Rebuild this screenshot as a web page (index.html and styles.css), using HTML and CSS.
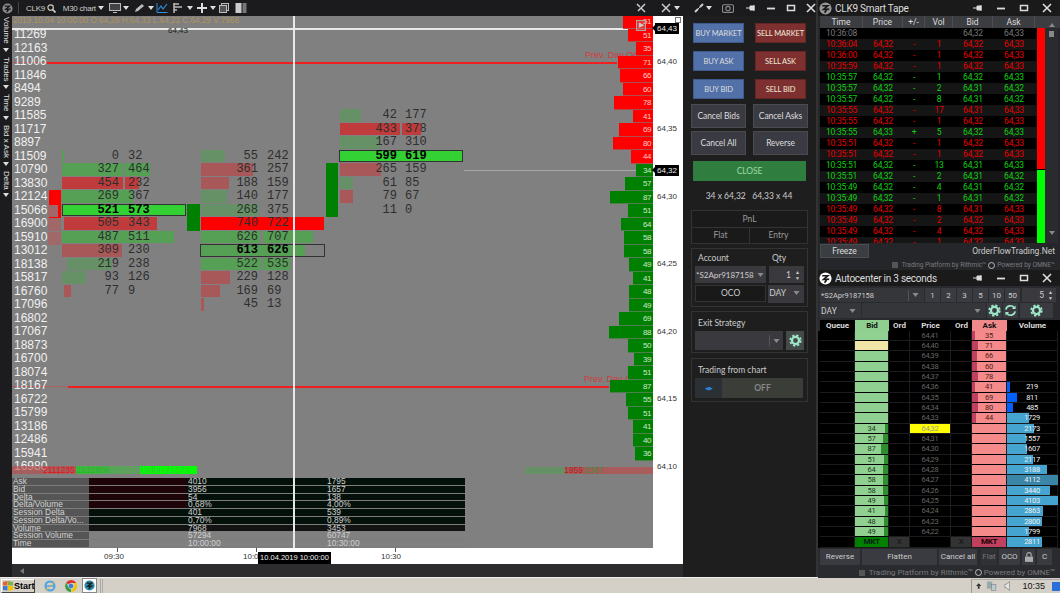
FILE: index.html
```html
<!DOCTYPE html>
<html lang="en">
<head>
<meta charset="utf-8">
<title>CLK9 chart</title>
<link rel="stylesheet" href="styles.css">
</head>
<body>
<svg class="defs" width="0" height="0">
  <symbol id="logo" viewBox="0 0 14 14"><circle cx="7" cy="7" r="6.5" fill="currentColor"/><path d="M3.5 4h6L5 8h3.5L6 11.5M9 7.5l2 .5" fill="none" stroke="#1a1a1a" stroke-width="1.8"/></symbol>
  <symbol id="pin" viewBox="0 0 10 8"><path d="M0 4h4M4 2h4v4H4zM8 1v6" stroke="currentColor" fill="currentColor" stroke-width="1"/></symbol>
  <symbol id="min" viewBox="0 0 10 8"><path d="M1 4.500h8" stroke="currentColor" stroke-width="1.800"/></symbol>
  <symbol id="max" viewBox="0 0 10 8"><rect x="1.500" y="1.500" width="7" height="5" fill="none" stroke="currentColor" stroke-width="1.500"/></symbol>
  <symbol id="close" viewBox="0 0 10 10"><path d="M1 1l8 8M9 1l-8 8" stroke="currentColor" stroke-width="1.600"/></symbol>
  <symbol id="gear" viewBox="0 0 14 14"><circle cx="7" cy="7" r="3.800" fill="none" stroke="currentColor" stroke-width="2.400"/><circle cx="7" cy="7" r="5.700" fill="none" stroke="currentColor" stroke-width="1.800" stroke-dasharray="2.500 2"/></symbol>
  <symbol id="refresh" viewBox="0 0 14 14"><path d="M2 6a5 5 0 0 1 9-2M12 8a5 5 0 0 1-9 2" fill="none" stroke="currentColor" stroke-width="1.800"/><path d="M12.500 1.500v4h-4zM1.500 12.500v-4h4z" fill="currentColor"/></symbol>
  <symbol id="caret" viewBox="0 0 6 4"><path d="M0 0h6L3 4z" fill="currentColor"/></symbol>
</svg>

<div class="desktop">
  <section class="chart-win">
    <header class="toolbar">
      <svg class="ico logo-gray"><use href="#logo"/></svg>
      <span class="tool-sep"></span>
      <span class="tool-label">CLK9</span>
      <svg class="ico-s ico-search" viewBox="0 0 10 10"><circle cx="4" cy="4" r="3" fill="none" stroke="#ccc" stroke-width="1.300"/><path d="M6 6l3.500 3.500" stroke="#ccc" stroke-width="1.800"/></svg>
      <span class="tool-label tool-wide">M30 chart<svg class="caret"><use href="#caret"/></svg></span>
      <span class="tool-group"><svg class="ico-m" viewBox="0 0 12 10"><rect x=".5" y=".5" width="11" height="7" fill="#444" stroke="#bbb"/><path d="M4 9.500h4" stroke="#bbb"/></svg><svg class="caret"><use href="#caret"/></svg></span>
      <span class="tool-group tg-0"><svg class="ico-m" viewBox="0 0 12 10"><path d="M1 9l1-3 6-5 2 2-6 5z" fill="#bbb"/></svg><svg class="caret"><use href="#caret"/></svg></span>
      <svg class="ico-m ico-line" viewBox="0 0 11 10"><path d="M.5 0v9.500H11" fill="none" stroke="#2f8fe0"/><path d="M1.500 7l3-4 2 3 4-5" fill="none" stroke="#2f8fe0" stroke-width="1.100"/></svg>
      <span class="tool-group tg-1"><svg class="ico-m" viewBox="0 0 12 10"><path d="M1 0v10M1 1h5M1 4h8M1 7h3" fill="none" stroke="#bbb" stroke-width="1.500"/></svg><svg class="caret"><use href="#caret"/></svg></span>
      <span class="tool-group tg-0"><svg class="ico-m" viewBox="0 0 10 10"><path d="M5 0v10M0 5h10" stroke="#ddd" stroke-width="2"/></svg><svg class="caret"><use href="#caret"/></svg></span>
      <svg class="ico-m" viewBox="0 0 10 10"><rect x="2.500" y=".5" width="7" height="7" fill="#333" stroke="#bbb"/><rect x=".5" y="2.500" width="7" height="7" fill="#555" stroke="#bbb"/></svg>
      <svg class="ico-m ico-cols" viewBox="0 0 11 10"><rect width="6" height="10" fill="#ccc"/><rect x="7" width="4" height="10" fill="#777"/></svg>
      <span class="tool-fill"></span>
      <svg class="ico-s" viewBox="0 0 10 10"><path d="M1 1l3 3M9 1L2 8M5 5l4 4" stroke="#ccc" stroke-width="1.500"/></svg>
      <svg class="ico-s ico-tools" viewBox="0 0 10 10"><path d="M1 1l8 8M9 1L1 9" stroke="#ccc" stroke-width="1.500"/></svg>
      <svg class="caret caret-end"><use href="#caret"/></svg>
    </header>
    <div class="chart-body">
      <aside class="side">
        <span class="side-item">Volume</span><svg class="caret"><use href="#caret"/></svg>
        <span class="side-item">Trades</span><svg class="caret"><use href="#caret"/></svg>
        <span class="side-item">Time</span><svg class="caret"><use href="#caret"/></svg>
        <span class="side-item">Bid x Ask</span><svg class="caret"><use href="#caret"/></svg>
        <span class="side-item">Delta</span><svg class="caret"><use href="#caret"/></svg>
      </aside>
      <div class="chart-main">
        <div class="chart-top">
          <div class="plot">
            <div class="canvas" id="canvas"></div>
            <div class="stats" id="stats"></div>
            <div class="cross-v"></div>
          </div>
          <div class="axis" id="axis"></div>
        </div>
        <div class="timeaxis">
          <span class="tick tick-a"></span><span class="tlabel tl-a">09:30</span>
          <span class="tick tick-b"></span><span class="tlabel tl-b">10:00</span>
          <span class="tick tick-c"></span><span class="tlabel tl-c">10:30</span>
          <span class="ttip">10.04.2019 10:00:00</span>
        </div>
        <div class="hscroll"><svg class="hs-arrow" viewBox="0 0 4 6"><path d="M4 0v6L0 3z" fill="#777"/></svg></div>
      </div>
    </div>
  </section>

  <section class="order">
    <header class="order-bar">
      <svg class="ico-s" viewBox="0 0 10 10"><path d="M1 9l3-3M6 4l3-3" stroke="#ccc" stroke-width="2"/><path d="M3 7l4-4" stroke="#ccc"/></svg>
      <svg class="caret"><use href="#caret"/></svg>
      <svg class="ico-m cam" viewBox="0 0 11 9"><rect x=".5" y="1.500" width="10" height="7" rx="1" fill="none" stroke="#888"/><circle cx="5.500" cy="5" r="2" fill="none" stroke="#888"/></svg>
      <svg class="winb"><use href="#pin"/></svg>
      <svg class="winb"><use href="#min"/></svg>
      <svg class="winb"><use href="#max"/></svg>
      <svg class="winb winx"><use href="#close"/></svg>
    </header>
    <div class="trade-grid">
      <button class="btn buy">BUY MARKET</button><button class="btn sell">SELL MARKET</button>
      <button class="btn buy">BUY ASK</button><button class="btn sell">SELL ASK</button>
      <button class="btn buy">BUY BID</button><button class="btn sell">SELL BID</button>
    </div>
    <div class="cancel-grid">
      <button class="btn cancel">Cancel Bids</button><button class="btn cancel">Cancel Asks</button>
      <button class="btn cancel">Cancel All</button><button class="btn cancel">Reverse</button>
    </div>
    <button class="btn close-btn">CLOSE</button>
    <div class="quote">34 x 64,32 &nbsp; 64,33 x 44</div>
    <div class="pnl">
      <div class="pnl-head">PnL</div>
      <div class="pnl-row"><span>Flat</span><span>Entry</span></div>
    </div>
    <div class="box box-account">
      <div class="acc-labels"><span>Account</span><span>Qty</span></div>
      <div class="acc-row">
        <div class="select sel-acc"><span>*S2Apr9187158</span><i class="sdiv"></i><svg class="caret"><use href="#caret"/></svg></div>
        <div class="select sel-qty"><span>1</span><span class="spin">&#9650;<br>&#9660;</span></div>
      </div>
      <div class="acc-row">
        <div class="oco">OCO</div>
        <div class="select sel-day"><span>DAY</span><svg class="caret"><use href="#caret"/></svg></div>
      </div>
    </div>
    <div class="box box-exit">
      <div class="box-title">Exit Strategy</div>
      <div class="acc-row">
        <div class="select sel-exit"><i class="sdiv"></i><svg class="caret"><use href="#caret"/></svg></div>
        <div class="gear-btn"><svg class="gear"><use href="#gear"/></svg></div>
      </div>
    </div>
    <div class="box box-trade">
      <div class="box-title">Trading from chart</div>
      <div class="toggle"><span class="tog-arrows">&#9664;&#9654;</span><span class="tog-off">OFF</span></div>
    </div>
  </section>

  <div class="right-col">
    <section class="tape">
      <header class="titlebar">
        <svg class="tlogo"><use href="#logo"/></svg>
        <span class="ttl">CLK9 Smart Tape</span>
        <svg class="winb"><use href="#pin"/></svg><svg class="winb"><use href="#min"/></svg><svg class="winb"><use href="#max"/></svg><svg class="winb winx"><use href="#close"/></svg>
      </header>
      <div class="tape-head"><span>Time</span><span>Price</span><span>+/-</span><span>Vol</span><span>Bid</span><span>Ask</span></div>
      <div class="tape-body">
        <div class="tape-rows" id="tape"></div>
        <div class="imbalance"><i class="im-red"></i><i class="im-green"></i></div>
        <div class="vscroll"><span class="vs-up"></span><span class="vs-thumb"></span><span class="vs-down"></span></div>
      </div>
      <div class="tape-foot"><button class="btn freeze">Freeze</button><span class="brand">OrderFlowTrading.Net</span></div>
      <div class="powered"><span class="pw-box"></span>Trading Platform by Rithmic&trade; <i class="pw-ring"></i> Powered by OMNE&trade;</div>
    </section>

    <section class="dom">
      <header class="titlebar">
        <svg class="tlogo white"><use href="#logo"/></svg>
        <span class="ttl">Autocenter in 3 seconds</span>
        <svg class="winb"><use href="#pin"/></svg><svg class="winb"><use href="#min"/></svg><svg class="winb"><use href="#max"/></svg><svg class="winb winx"><use href="#close"/></svg>
      </header>
      <div class="ctl-row ctl-1">
        <div class="select dsel"><span>*S2Apr9187158</span><i class="sdiv"></i><svg class="caret"><use href="#caret"/></svg></div>
        <span class="qbtn">1</span><span class="qbtn">2</span><span class="qbtn">3</span><span class="qbtn">5</span><span class="qbtn">10</span><span class="qbtn">50</span>
        <div class="select dqty"><span>5</span><span class="spin">&#9650;<br>&#9660;</span></div>
      </div>
      <div class="ctl-row ctl-2">
        <div class="select dday"><span>DAY</span><svg class="caret"><use href="#caret"/></svg></div>
        <div class="select dstr"><svg class="caret"><use href="#caret"/></svg></div>
        <span class="gbtn"><svg class="gear"><use href="#gear"/></svg></span>
        <span class="gbtn"><svg class="gear"><use href="#refresh"/></svg></span>
        <span class="gbtn gwide"><svg class="gear"><use href="#gear"/></svg></span>
      </div>
      <div class="dom-head"><span>Queue</span><span class="h-bid">Bid</span><span>Ord</span><span>Price</span><span>Ord</span><span class="h-ask">Ask</span><span>Volume</span></div>
      <div class="dom-rows" id="dom"></div>
      <div class="dom-btns">
        <span class="dbtn b-rev">Reverse</span><span class="dbtn b-fl">Flatten</span><span class="dbtn b-can">Cancel all</span><span class="dbtn b-flat">Flat</span><span class="dbtn b-oco">OCO</span>
        <span class="dbtn b-lock"><svg class="lock" viewBox="0 0 9 11"><rect y="5" width="9" height="6" fill="#aaa"/><path d="M2 5V3a2.500 2.500 0 0 1 5 0v2" fill="none" stroke="#aaa" stroke-width="1.300"/></svg></span>
        <span class="dbtn b-c">C</span>
      </div>
      <div class="powered dom-pw"><span class="pw-box"></span>Trading Platform by Rithmic&trade; <i class="pw-ring"></i> Powered by OMNE&trade;</div>
    </section>
  </div>
</div>

<footer class="taskbar">
  <button class="start"><svg class="flag" viewBox="0 0 10 10"><path d="M0 1l4.500-1v4.500H0z" fill="#e8622a"/><path d="M5 0l5 1v3.500H5z" fill="#7cb342"/><path d="M0 5h4.500v4.500L0 9z" fill="#3a7bd5"/><path d="M5 5h5v4l-5 1z" fill="#f5c400"/></svg>Start</button>
  <svg class="tb-ico ie" viewBox="0 0 12 12"><circle cx="6" cy="6" r="4.500" fill="none" stroke="#4aa3e0" stroke-width="2"/><path d="M1 6h10" stroke="#4aa3e0" stroke-width="1.500"/><path d="M1 10C3 11 9 4 11 1" fill="none" stroke="#e8b84a"/></svg>
  <svg class="tb-ico ch" viewBox="0 0 12 12"><path d="M6 0a6 6 0 0 1 5.200 3H6a3 3 0 0 0-2.600 1.500L1.200 2.600A6 6 0 0 1 6 0z" fill="#d33"/><path d="M11.200 3A6 6 0 0 1 6 12l2.600-4.500A3 3 0 0 0 8.500 3z" fill="#f5c400"/><path d="M6 12A6 6 0 0 1 1.200 2.600L3.500 7.500A3 3 0 0 0 6 9z" fill="#3a9b45"/><circle cx="6" cy="6" r="2.300" fill="#3a7bd5"/></svg>
  <span class="tb-app"><svg class="tb-logo"><use href="#logo"/></svg></span>
  <span class="tb-grip"></span>
  <span class="tb-fill"></span>
  <div class="tray">
    <svg class="tray-a" viewBox="0 0 6 6"><path d="M3 0l3 3H4v3H2V3H0z" fill="#333"/></svg>
    <svg class="tray-n" viewBox="0 0 12 12"><rect x="1" y="1" width="6" height="8" fill="#9aa"/><rect x="6" y="4" width="5" height="7" fill="#bcc" stroke="#667" stroke-width=".5"/></svg>
    <svg class="tray-s" viewBox="0 0 8 12"><path d="M1 4h2l3-3v10L3 8H1z" fill="#e8e8e8" stroke="#666" stroke-width=".6"/></svg>
    <span class="clock">10:35</span>
    <span class="showdesk"></span>
  </div>
</footer>
<script src="script.js"></script>
</body>
</html>
```
FILE: styles.css
```css
* { box-sizing: border-box; }
html, body { margin: 0; padding: 0; }
body { width: 1060px; height: 593px; overflow: hidden; background: #1c1c1c; font-family: Roboto, "Liberation Sans", sans-serif; color: #ccc; }
.defs { position: absolute; }
button { font-family: inherit; padding: 0; }
.desktop { display: flex; height: 577px; }
.caret { width: 6px; height: 4px; color: #ddd; flex: none; display: inline-block; }

/* chart window */
.chart-win { width: 684px; display: flex; flex-direction: column; background: #1c1c1f; }
.toolbar { height: 16px; flex: none; display: flex; align-items: center; padding-left: 2px; background: #1b1b1d; font-size: 8px; color: #ccc; white-space: nowrap; }
.ico { width: 11px; height: 11px; }
.logo-gray { color: #888; }
.tool-sep { width: 1px; height: 12px; background: #444; margin: 0 7px 0 5px; }
.tool-label { display: inline-flex; align-items: center; gap: 2px; font-family: "Liberation Sans", sans-serif; letter-spacing: -.3px; }
.ico-s { width: 10px; height: 10px; margin-left: 4px; flex: none; }
.ico-search { margin-left: 2px; width: 9px; height: 9px; }
.tool-wide { width: 46px; margin-left: 7px; }
.tool-group { display: inline-flex; align-items: center; gap: 2px; width: 22px; margin-right: 3px; }
.tg-0 { margin-right: 0; }
.tg-1 { margin-right: 1px; }
.ico-m { width: 12px; height: 10px; flex: none; }
.ico-line { margin: 0 5px 0 0; }
.ico-cols { margin-left: 5px; }
.tool-fill { flex: 1; }
.ico-tools { margin-left: 15px; }
.caret-end { margin: 0 4px 0 3px; }

.chart-body { flex: 1; display: flex; min-height: 0; }
.side { width: 12px; flex: none; display: flex; flex-direction: column; align-items: center; gap: 4px; background: #1c1c1f; }
.side-item { writing-mode: vertical-rl; font: 8px/11px "Liberation Sans", sans-serif; color: #e0e0e0; margin-top: 1px; }
.chart-main { flex: 1; display: flex; flex-direction: column; padding-right: 1px; min-width: 0; }
.chart-top { height: 532px; display: flex; }
.plot { width: 641px; position: relative; display: flex; flex-direction: column; background: #808080; }
.canvas { position: relative; height: 462px; overflow: hidden; }
.axis { width: 30px; background: #fff; position: relative; }
.cross-v { position: absolute; left: 281px; top: 0; bottom: 0; width: 1.500px; background: #e8e8e8; }
.mark { position: absolute; white-space: nowrap; }

.num { font: 12px/14px "Liberation Sans", sans-serif; color: #f0f0f0; }
.fp { font: 12px/14px "Liberation Mono", monospace; color: #2e2e2e; }
.fp-b { font-weight: 700; color: #000; }
.bar-g { background: #55a055; }
.bar-gd { background: #669166; }
.bar-r { background: #c03c3c; }
.bar-rd { background: #a85858; }
.bar-R { background: #f00; }
.bar-G { background: #33d133; }
.poc { border: 1px solid #333; }
.poc-empty { border: 1px solid #333; background: transparent; }
.candle-r { background: #f00; }
.candle-g { background: #008000; }
.candle-dim { background: #a06868; }
.line-red { background: #f02020; }
.line-faint { background: #b06060; }
.line-w { background: #e8e8e8; }
.line-g { background: #a8a8a8; }
.ohlc { font: 8.200px/10px "Liberation Sans", sans-serif; color: #b0935c; }
.px { font: 8px/12px "Liberation Sans", sans-serif; color: #222; }
.prev { font: 9px/12px "Liberation Sans", sans-serif; color: #d23c3c; }
.pf { font: 8px/13px "Liberation Sans", sans-serif; letter-spacing: -.5px; text-align: right; padding-right: 2px; color: #e4e4e4; border-bottom: 1px solid rgba(128,128,128,.6); }
.pf-r { background: #f00; color: #ffc8c8; }
.pf-g { background: #008000; color: #cfe8cf; }
.nav-box { border: 1px solid #aaa; color: #ccc; font-size: 7px; line-height: 8px; text-align: center; background: rgba(200,200,200,.25); }
.strip-r { background: rgba(190,70,70,.6); }
.strip-g { background: linear-gradient(90deg, #3fb83f, #669a66); }
.strip-l { background: #0f0; }
.strip-dg { background: #669166; }
.strip-dr { background: #a85c5c; }
.stx { font: 8.500px/10px "Liberation Sans", sans-serif; }
.tx-r { color: #e81010; }
.tx-g { color: #16c016; }
.tx-l { color: #3cc83c; }
.tx-dr { color: #b02020; }
.tx-dg { color: #3f8f3f; }

.ax { font: 8px/12px "Liberation Sans", sans-serif; color: #333; }
.tag { width: 24px; height: 11px; background: #000; color: #eee; font: 8px/11px "Liberation Sans", sans-serif; text-align: center; }
.tag::before { content: ""; position: absolute; left: -3px; top: 2px; border: 3.500px solid transparent; border-left-width: 0; border-right: 3px solid #000; }
.ax-ico { border: 1px solid #777; background: #fff; }

.stats { height: 70px; display: grid; grid-template-columns: 77px 98px 139px 139px; grid-auto-rows: 7.750px; font: 9px/7.750px "Liberation Sans", sans-serif; color: #d0d0d0; overflow: hidden; }
.st { border-bottom: 1px solid #7c7c7c; padding-left: 1px; white-space: nowrap; overflow: visible; }
.st span { display: inline-block; transform: scaleX(.93); transform-origin: left center; }
.st-l { background: #555; color: #d4d4d4; }
.st-dr { background: #1e0308; }
.st-dg { background: #04100a; }
.st-k { background: #131313; }
.st-gr { background: #808080; }

.timeaxis { height: 16px; background: #fff; position: relative; font: 8px/12px "Liberation Sans", sans-serif; color: #333; flex: none; }
.tick { position: absolute; top: 0; width: 1px; height: 4px; background: #555; }
.tick-a { left: 105px; }
.tick-b { left: 244px; }
.tick-c { left: 383px; }
.tlabel { position: absolute; top: 3px; }
.tl-a { left: 92px; }
.tl-b { left: 231px; }
.tl-c { left: 369px; }
.ttip { position: absolute; left: 246px; top: 4px; width: 73px; height: 12px; background: #000; color: #eee; font-size: 7.500px; text-align: center; white-space: nowrap; }
.hscroll { height: 13px; background: #2c2c2e; display: flex; align-items: center; padding-left: 8px; }
.hs-arrow { width: 4px; height: 6px; }

/* order panel */
.order { width: 134px; flex: none; background: #1e1e1e; border-right: 2px solid #333; font-family: Lato, Roboto, sans-serif; }
.order-bar { height: 16px; display: flex; align-items: center; padding-left: 6px; background: #1b1b1d; color: #ccc; }
.order-bar .caret { margin: 0 0 0 2px; }
.cam { margin: 0 12px 0 10px; }
.winb { width: 10px; height: 8px; color: #ddd; flex: none; margin-right: 10px; }
.winx { height: 10px; margin-right: 0; }
.btn { border: 1px solid #444; color: #ddd; font-size: 8.500px; letter-spacing: -.1px; white-space: nowrap; cursor: default; display: block; text-align: center; }
.trade-grid { display: grid; grid-template-columns: 51px 51px; grid-auto-rows: 20px; column-gap: 11px; row-gap: 8px; margin: 7px 0 0 9px; }
.buy { background: #5271a8; border-color: #3c5a90; font-size: 7.500px; }
.sell { background: #7e2f2f; border-color: #652424; color: #eed; font-size: 7.500px; }
.cancel-grid { display: grid; grid-template-columns: 55px 55px; grid-auto-rows: 24px; column-gap: 7px; row-gap: 3px; margin: 5px 0 0 7px; }
.cancel { background: #3a3a42; border-color: #4b4b4f; }
.close-btn { width: 113px; height: 20px; margin: 6px 0 0 9px; background: #2f7d3f; border-color: #2f7d3f; color: #a0d8a8; }
.quote { margin-top: 8px; height: 14px; font-size: 8.500px; line-height: 14px; text-align: center; color: #ccc; padding-right: 2px; }
.pnl { margin: 7px 0 0 7px; width: 117px; border: 1px solid #333; font-size: 8.500px; color: #999; background: #1a1a1a; height: 34px; }
.pnl-head { height: 17px; line-height: 16px; text-align: center; border-bottom: 1px solid #333; }
.pnl-row { display: flex; line-height: 15px; }
.pnl-row span { flex: 1; text-align: center; }
.pnl-row span + span { border-left: 1px solid #333; }
.box { margin: 4px 0 0 7px; width: 117px; border: 1px solid #333; padding: 0 3px; font-size: 8.500px; }
.box-account { height: 59px; }
.box-exit { height: 42px; }
.box-trade { height: 44px; margin-top: 5px; }
.acc-labels { display: flex; height: 17px; line-height: 18px; padding: 0 0 0 3px; color: #ccc; }
.acc-labels span:first-child { width: 74px; }
.acc-row { display: flex; gap: 3px; margin-bottom: 2px; }
.select { background: #3a3a3e; color: #ccc; display: flex; align-items: center; font-size: 8.500px; height: 17px; }
.select .caret { color: #8a8a8a; width: 7px; }
.sdiv { width: 1px; height: 11px; background: #555; margin: 0 3px 0 auto; }
.sel-acc { width: 71px; padding-left: 1px; }
.sel-acc .caret { margin-right: 3px; }
.sel-acc span { white-space: nowrap; font-size: 8px; }
.sel-qty { width: 36px; justify-content: flex-end; padding-right: 4px; gap: 4px; }
.spin { font-size: 5px; line-height: 6px; color: #ccc; }
.oco { width: 72px; height: 17px; border: 1px solid #333; text-align: center; line-height: 15px; background: #191919; color: #ccc; }
.sel-day { width: 36px; height: 18px; justify-content: space-between; padding: 0 4px 3px 1px; margin-left: -1px; }
.box-title { height: 19px; line-height: 22px; padding-left: 3px; color: #ccc; }
.sel-exit { width: 88px; height: 19px; padding-right: 3px; }
.sel-exit .sdiv { margin-right: 3px; }
.gear-btn { width: 18px; height: 19px; background: #444a4a; display: flex; align-items: center; justify-content: center; }
.gear { width: 13px; height: 13px; color: #9fe8c8; }
.toggle { display: flex; height: 20px; width: 108px; background: #3a3d38; }
.tog-arrows { width: 27px; background: #2b3035; color: #2a86e0; font-size: 5px; line-height: 20px; text-align: center; }
.tog-off { flex: 1; text-align: center; line-height: 20px; color: #888; font-weight: 700; }

/* right column */
.right-col { width: 242px; flex: none; display: flex; flex-direction: column; }
.tape { height: 270px; display: flex; flex-direction: column; background: #25262a; }
.titlebar { height: 16px; flex: none; display: flex; align-items: center; background: #1a1a1a; padding-right: 8px; color: #ddd; }
.tlogo { width: 13px; height: 13px; margin-left: 1px; color: #999; flex: none; }
.tlogo.white { color: #fff; }
.ttl { flex: 1; font-size: 10px; letter-spacing: -.25px; margin-left: 3px; color: #ddd; white-space: nowrap; }
.titlebar .winb { margin-right: 13px; }
.titlebar .winx { margin-right: 0; }
.tape-head { height: 12px; flex: none; margin-left: 2px; display: grid; grid-template-columns: 43px 40px 22px 28px 40px 42px 25px; background: #3b3d41; font-size: 8.500px; line-height: 12px; text-align: center; color: #ddd; }
.tape-head span { border-right: 1px solid #4c4e52; }
.tape-body { height: 215px; flex: none; display: flex; margin-left: 2px; }
.tape-rows { width: 217px; overflow: hidden; background: #000; }
.tr { height: 11px; display: grid; grid-template-columns: 43px 40px 22px 28px 40px 42px; font-size: 8.500px; letter-spacing: -.2px; line-height: 11px; text-align: center; }
.tr:nth-child(even) { background: #151515; }
.tr-r { color: #e60000; }
.tr-g { color: #10d010; }
.tr-x { color: #777; }
.imbalance { width: 8px; display: flex; flex-direction: column; background: #000; }
.im-red { height: 141px; background: #f00; }
.im-green { flex: 1; margin-top: 1px; background: #0f0; }
.vscroll { width: 13px; background: #2a2b2f; display: flex; flex-direction: column; align-items: center; }
.vs-up { border: 3.500px solid transparent; border-top: 0; border-bottom: 4px solid #888; margin-top: -5px; }
.vs-thumb { width: 5px; height: 6px; background: #888; margin-top: 4px; }
.vs-down { border: 3.500px solid transparent; border-bottom: 0; border-top: 4px solid #888; margin-top: auto; margin-bottom: 8px; }
.tape-foot { height: 17px; flex: none; display: flex; align-items: center; justify-content: space-between; padding: 0 5px 1px 2px; }
.freeze { width: 49px; height: 14px; background: #3a3d42; border-color: #4a4c50; line-height: 12px; }
.brand { font-size: 8.500px; color: #ccc; }
.powered { height: 10px; flex: none; display: flex; align-items: center; justify-content: flex-end; font-size: 6.500px; color: #7a7a7a; padding-right: 5px; gap: 2px; white-space: nowrap; }
.pw-box { width: 6px; height: 6px; background: #555; margin-right: 2px; }
.pw-ring { width: 7px; height: 7px; border: 1px solid #bbb; border-radius: 50%; }

.dom { flex: 1; display: flex; flex-direction: column; background: #2a2b2f; }
.ctl-row { display: flex; align-items: stretch; margin-left: 2px; }
.ctl-1 { height: 14px; margin-top: 2px; gap: 1px; }
.ctl-2 { height: 15px; margin-top: 1px; gap: 1px; }
.dsel { width: 104px; height: 14px; padding-left: 1px; background: #35363a; font-size: 7.500px; }
.dsel .caret { margin-right: 5px; }
.qbtn { width: 15px; background: #3a3b40; font-size: 8px; line-height: 15px; text-align: center; color: #ccc; }
.dqty { width: 34px; height: 14px; margin-left: 1px; justify-content: flex-end; gap: 4px; padding-right: 3px; }
.dday { width: 41px; height: 15px; background: #35363a; justify-content: space-between; padding: 0 5px 0 1px; }
.dstr { width: 124px; height: 15px; background: #35363a; justify-content: flex-end; padding-right: 5px; }
.gbtn { width: 15px; background: #3a3b40; display: flex; align-items: center; justify-content: center; }
.gwide { width: 33px; margin-left: 1px; }
.dom-head, .dr { display: grid; grid-template-columns: 35px 34px 21px 41px 21px 35px 51px; margin-left: 2px; text-align: center; }
.dom-head { height: 11px; margin-top: 2px; background: #000; font-size: 8px; line-height: 11px; font-weight: 700; color: #ddd; }
.h-bid { background: #8fd08f; color: #111; }
.h-ask { background: #f08a8a; color: #111; }
.dom-rows { background: #000; }
.dr { height: 10px; font-size: 7.500px; letter-spacing: -.3px; line-height: 10px; background: #000; color: #555; }
.dr:nth-child(3n) { height: 11px; }
.dc { position: relative; border-bottom: 1px solid #1c1c1c; border-right: 1px solid #1c1c1c; min-height: 0; }
.dc-price { color: #666; }
.dc-last { background: #ff0; color: #999; }
.dc-bid { background: #90d090; color: #204020; border-bottom-color: #000; }
.dc-pale { background: #f0e6a8; }
.dc-ask { background: #f58a8a; color: #502020; border-bottom-color: #000; }
.dc-x { background: #333; color: #111; font-size: 8px; }
.dc-mktb { background: #008000; color: #021; font-weight: 700; font-size: 8px; }
.dc-mkta { background: #c04060; color: #200; font-weight: 700; font-size: 8px; }
.dc-vol { color: #eee; }
.cell-t { position: relative; }
.fill { position: absolute; top: 0; bottom: 0; }
.fill-bid { right: 0; background: #2f8f2f; }
.fill-ask { left: 0; background: #c04060; }
.fill-v { left: 0; background: #45a5d0; }
.fill-vb { left: 0; background: #0060ff; }
.fill-vd { left: 0; background: #3a86a8; }
.fill-s { left: 0; width: 3px; background: #008000; }
.dom-btns { display: flex; height: 16px; margin-top: 1px; margin-left: 2px; gap: 2px; }
.dbtn { background: #3a3b40; color: #ccc; font-size: 8px; line-height: 16px; text-align: center; white-space: nowrap; }
.b-rev { width: 40px; }
.b-fl { width: 75px; }
.b-can { width: 38px; }
.b-flat { width: 16px; margin-left: 2px; color: #777; background: #303135; }
.b-oco { width: 21px; }
.b-lock { width: 13px; }
.b-c { width: 15px; }
.lock { width: 8px; height: 10px; margin-top: 3px; }
.dom-pw { margin-top: 2px; height: 11px; font-size: 8px; }

/* taskbar */
.taskbar { height: 16px; background: #d4d0c8; display: flex; align-items: center; color: #000; border-top: 1px solid #eee; }
.start { width: 34px; height: 14px; margin-left: 1px; background: #d4d0c8; border: 1px solid; border-color: #fff #444 #444 #fff; font: 700 9px/12px "Liberation Sans", sans-serif; display: flex; align-items: center; gap: 1px; padding-left: 1px; }
.flag { width: 10px; height: 10px; flex: none; }
.tb-ico { width: 12px; height: 12px; flex: none; }
.ie { margin-left: 9px; }
.ch { margin-left: 9px; }
.tb-app { width: 15px; height: 15px; margin-left: 5px; background: #fff; border: 1px solid #888; display: flex; align-items: center; justify-content: center; }
.tb-logo { width: 11px; height: 11px; color: #2a8aa8; }
.tb-grip { width: 3px; height: 14px; margin-left: 3px; border-left: 1px solid #aaa; border-right: 1px solid #aaa; }
.tb-fill { flex: 1; }
.tray { width: 89px; height: 14px; display: flex; align-items: center; border-left: 1px solid #999; border-top: 1px solid #aaa; padding-left: 4px; }
.tray-a { width: 6px; height: 6px; }
.tray-n { width: 12px; height: 12px; margin-left: 5px; }
.tray-s { width: 8px; height: 12px; margin-left: 7px; }
.clock { font: 9px/14px "Liberation Sans", sans-serif; margin-left: 11px; color: #111; }
.showdesk { width: 9px; height: 9px; margin-left: 7px; background: #2a6fd8; }
```
FILE: script.js
```js
// page coordinates -> canvas coordinates (canvas origin is at 12,16)
var canvas = document.getElementById('canvas');
function add(parent, cls, x, y, w, h, text) {
  var el = document.createElement('div');
  el.className = 'mark ' + cls;
  el.style.left = x + 'px';
  el.style.top = y + 'px';
  if (w != null) el.style.width = w + 'px';
  if (h != null) el.style.height = h + 'px';
  if (text != null) el.textContent = text;
  parent.appendChild(el);
  return el;
}
function mark(cls, x, y, w, h, text) { return add(canvas, cls, x - 12, y - 16, w, h, text); }

// horizontal levels
mark('line-w', 12, 27.5, 641, 2);
mark('line-red', 47, 61.5, 570, 2);
mark('line-faint', 12, 62, 35, 1);
mark('line-faint', 12, 386, 56, 1);
mark('line-red', 68, 385.5, 541, 2);
mark('line-g', 464, 170, 176, 1);

// header texts
mark('ohlc', 13, 16, null, null, '2019.10.04 10:00:00 O:64,28 H:64,33 L:64,22 C:64,29 V:7968');
mark('px', 168, 25, null, null, '64,43');
mark('prev', 585, 49, null, null, 'Prev. Day Open');
mark('prev', 584, 373, null, null, 'Prev. Day Close');

// volume per row, left column
var vols = [11269,12163,11006,11846,8494,9289,11585,11717,8897,11509,10790,13830,12124,15066,16900,15910,13012,18138,15817,16760,17096,16802,17067,18873,16700,18074,18167,16722,15799,13186,12486,15941,16980];
vols.forEach(function (v, i) { mark('num', 14, 34 + 13.5 * i - 7, null, null, v); });

// candles
mark('candle-r', 49, 190, 12, 28);
mark('candle-dim', 48, 205, 10, 12);
mark('candle-dim', 48, 218, 13, 13);
mark('candle-dim', 48, 232, 13, 13);
mark('candle-g', 187, 204, 13, 27);
mark('candle-g', 326, 163, 12, 54);

// footprint cells: [row, bid, ask, [barClass, x0, x1]..., opts]
var cols = [
  { bidR: 119, askL: 128, rows: [
    [9, 0, 32, [['bar-g', 62, 64]]],
    [10, 327, 464, [['bar-g', 62, 123], ['bar-g', 125, 150]]],
    [11, 454, 232, [['bar-r', 62, 123], ['bar-r', 125, 139]]],
    [12, 269, 367, [['bar-g', 62, 133]]],
    [13, 521, 573, [['bar-G poc', 62, 186]], true],
    [14, 505, 343, [['bar-r', 64, 157]]],
    [15, 487, 511, [['bar-g', 62, 174]]],
    [16, 309, 230, [['bar-rd', 62, 122]]],
    [17, 219, 238, [['bar-gd', 67, 112]]],
    [18, 93, 126, [['bar-gd', 62, 86]]],
    [19, 77, 9, [['bar-rd', 64, 71]]]
  ]},
  { bidR: 258, askL: 267, rows: [
    [9, 55, 242, [['bar-gd', 201, 225]]],
    [10, 361, 257, [['bar-rd', 201, 253]]],
    [11, 188, 159, [['bar-rd', 201, 229]]],
    [12, 140, 177, [['bar-gd', 201, 227]]],
    [13, 268, 375, [['bar-gd', 201, 258]]],
    [14, 740, 722, [['bar-R', 201, 324]]],
    [15, 626, 707, [['bar-g', 201, 260], ['bar-g', 263, 313]]],
    [16, 613, 626, [['bar-g', 201, 305], ['poc-empty', 200, 325]], true],
    [17, 522, 535, [['bar-g', 201, 261], ['bar-g', 263, 290]]],
    [18, 229, 128, [['bar-rd', 201, 230]]],
    [19, 169, 69, [['bar-rd', 201, 220]]],
    [20, 45, 13, [['bar-rd', 201, 204]]]
  ]},
  { bidR: 397, askL: 405, rows: [
    [6, 42, 177, [['bar-gd', 340, 361]]],
    [7, 433, 378, [['bar-r', 340, 400], ['bar-r', 402, 421]]],
    [8, 167, 310, [['bar-gd', 340, 380]]],
    [9, 599, 619, [['bar-G poc', 339, 463]], true],
    [10, 265, 159, [['bar-rd', 340, 381]]],
    [11, 61, 85, [['bar-gd', 340, 353]]],
    [12, 79, 67, [['bar-rd', 340, 353]]],
    [13, 11, 0, []]
  ]}
];
cols.forEach(function (c) {
  c.rows.forEach(function (r) {
    var cy = 34 + 13.5 * r[0];
    r[3].forEach(function (b) { mark(b[0], b[1], cy - 6, b[2] - b[1], 12.5); });
    var cls = 'fp' + (r[4] ? ' fp-b' : '');
    var a = mark(cls, c.bidR - 40, cy - 7, 40, null, r[1]);
    a.style.textAlign = 'right';
    mark(cls, c.askL, cy - 7, null, null, r[2]);
  });
});

// volume profile on the right
var prof = [51,51,35,71,66,60,78,41,69,80,44,34,57,87,51,64,58,58,49,41,48,49,69,88,50,39,51,87,55,51,41,40,36];
prof.forEach(function (v, i) {
  var w = i === 0 ? 30 : v / 2;
  mark('pf ' + (i < 11 ? 'pf-r' : 'pf-g'), 653 - w, 22 + 13.5 * i - 6.75, w, 13.5, v);
});
mark('nav-box', 636, 20, 10, 11, '\u25B6');

// totals strip
mark('strip-r', 12, 466, 64, 8);
mark('strip-g', 76, 466, 64, 8);
mark('strip-l', 140, 466, 57, 8);
mark('strip-dg', 525, 467, 40, 7);
mark('strip-dr', 565, 467, 88, 7);
mark('stx tx-r', 43, 465, null, null, '2111235');
mark('stx tx-g', 76, 465, null, null, '2132808');
mark('stx tx-l', 141, 465, null, null, 'Delta=21573');
mark('stx tx-dr', 564, 465, null, null, '1959');
mark('stx tx-dg', 584, 465, null, null, '2367');

// price axis
var axis = document.getElementById('axis');
[[62,'64,40'],[129,'64,35'],[197,'64,30'],[264,'64,25'],[332,'64,20'],[399,'64,15'],[467,'64,10']].forEach(function (p) {
  add(axis, 'ax', 4, p[0] - 6 - 16, null, null, p[1]);
});
add(axis, 'ax-ico', 22, 1, 6, 6);
add(axis, 'tag', 2, 7, null, null, '64,43');
add(axis, 'tag', 2, 149, null, null, '64,32');

// stats table
var stats = [
  ['Ask', 'st-dr', 'st-dg', '4010', '1795'],
  ['Bid', 'st-dr', 'st-dg', '3956', '1657'],
  ['Delta', 'st-dr', 'st-dg', '54', '138'],
  ['Delta/Volume', 'st-dr', 'st-dg', '0,68%', '4,00%'],
  ['Session Delta', 'st-dg', 'st-dg', '401', '539'],
  ['Session  Delta/Vo...', 'st-dg', 'st-dg', '0,70%', '0,89%'],
  ['Volume', 'st-k', 'st-k', '7968', '3453'],
  ['Session Volume', 'st-gr', 'st-gr', '57294', '60747'],
  ['Time', 'st-gr', 'st-gr', '10:00:00', '10:30:00']
];
var statsEl = document.getElementById('stats');
function cell(parent, cls, text) {
  var d = document.createElement('div');
  d.className = cls;
  var s = document.createElement('span');
  s.textContent = text;
  d.appendChild(s);
  parent.appendChild(d);
}
stats.forEach(function (r) {
  cell(statsEl, 'st st-l', r[0]);
  cell(statsEl, 'st ' + r[1], '');
  cell(statsEl, 'st ' + r[2], r[3]);
  cell(statsEl, 'st ' + r[2], r[4]);
});

// smart tape
var t = [
  ['x','10:36:08','','','','64,32','64,33'],
  ['r','10:36:04','64,32','-','1','64,32','64,33'],
  ['r','10:36:00','64,32','-','1','64,32','64,33'],
  ['r','10:35:59','64,32','-','1','64,32','64,33'],
  ['g','10:35:57','64,32','-','1','64,32','64,33'],
  ['g','10:35:57','64,32','-','2','64,31','64,32'],
  ['g','10:35:57','64,32','-','8','64,31','64,32'],
  ['r','10:35:55','64,32','-','17','64,31','64,33'],
  ['r','10:35:55','64,32','-','1','64,32','64,33'],
  ['g','10:35:55','64,33','+','5','64,32','64,33'],
  ['r','10:35:51','64,32','-','1','64,32','64,33'],
  ['r','10:35:51','64,32','-','1','64,32','64,33'],
  ['g','10:35:51','64,32','-','13','64,31','64,33'],
  ['g','10:35:51','64,32','-','2','64,31','64,32'],
  ['g','10:35:49','64,32','-','4','64,31','64,32'],
  ['g','10:35:49','64,32','-','1','64,31','64,32'],
  ['r','10:35:49','64,32','-','8','64,31','64,33'],
  ['r','10:35:49','64,32','-','2','64,32','64,33'],
  ['r','10:35:49','64,32','-','4','64,32','64,33'],
  ['r','10:35:49','64,32','-','1','64,32','64,33']
];
var tape = document.getElementById('tape');
t.forEach(function (r) {
  var row = document.createElement('div');
  row.className = 'tr tr-' + r[0];
  r.slice(1).forEach(function (v) {
    var c = document.createElement('span');
    c.textContent = v;
    row.appendChild(c);
  });
  tape.appendChild(row);
});

// depth of market
var bids = { '64,32':34,'64,31':57,'64,30':87,'64,29':51,'64,28':64,'64,27':58,'64,26':58,'64,25':49,'64,24':41,'64,23':48,'64,22':49 };
var asks = { '64,41':35,'64,40':71,'64,39':66,'64,38':60,'64,37':78,'64,36':41,'64,35':69,'64,34':80,'64,33':44 };
var vol = { '64,36':219,'64,35':811,'64,34':485,'64,33':1729,'64,32':2173,'64,31':1557,'64,30':1607,'64,29':2117,'64,28':3188,'64,27':4112,'64,26':3440,'64,25':4103,'64,24':2863,'64,23':2800,'64,22':1799 };
var dom = document.getElementById('dom');
function dc(row, cls, text) {
  var c = document.createElement('div');
  c.className = 'dc ' + cls;
  if (text != null) c.textContent = text;
  row.appendChild(c);
  return c;
}
function fill(c, cls, w) {
  var f = document.createElement('i');
  f.className = 'fill ' + cls;
  if (w != null) f.style.width = w + 'px';
  c.insertBefore(f, c.firstChild);
}
function volCell(row, v, p) {
  var c = dc(row, 'dc-vol');
  var tx = document.createElement('span');
  tx.className = 'cell-t';
  tx.textContent = v;
  c.appendChild(tx);
  if (v == null) return;
  var cls = v < 1000 ? 'fill-vb' : v === 4112 ? 'fill-vd' : 'fill-v';
  var w = v < 1000 ? Math.max(2, v * 0.0125) : v * 0.0125;
  fill(c, cls, w);
  if (p >= 23 && p <= 32) fill(c, 'fill-s');
}
for (var i = 41; i >= 22; i--) {
  var p = '64,' + i;
  var row = document.createElement('div');
  row.className = 'dr';
  dc(row, '');
  var b = dc(row, 'dc-bid' + (i === 40 ? ' dc-pale' : ''), bids[p]);
  if (bids[p]) fill(b, 'fill-bid', bids[p] * 0.08);
  dc(row, '');
  dc(row, 'dc-price' + (i === 32 ? ' dc-last' : ''), p);
  dc(row, '');
  var a = dc(row, 'dc-ask', asks[p]);
  if (asks[p]) fill(a, 'fill-ask', asks[p] * 0.08);
  volCell(row, vol[p], i);
  dom.appendChild(row);
}
var last = document.createElement('div');
last.className = 'dr';
dc(last, '');
dc(last, 'dc-mktb', 'MKT');
dc(last, 'dc-x', 'X');
dc(last, '');
dc(last, 'dc-x', 'X');
dc(last, 'dc-mkta', 'MKT');
volCell(last, 2811, 0);
dom.appendChild(last);
```
